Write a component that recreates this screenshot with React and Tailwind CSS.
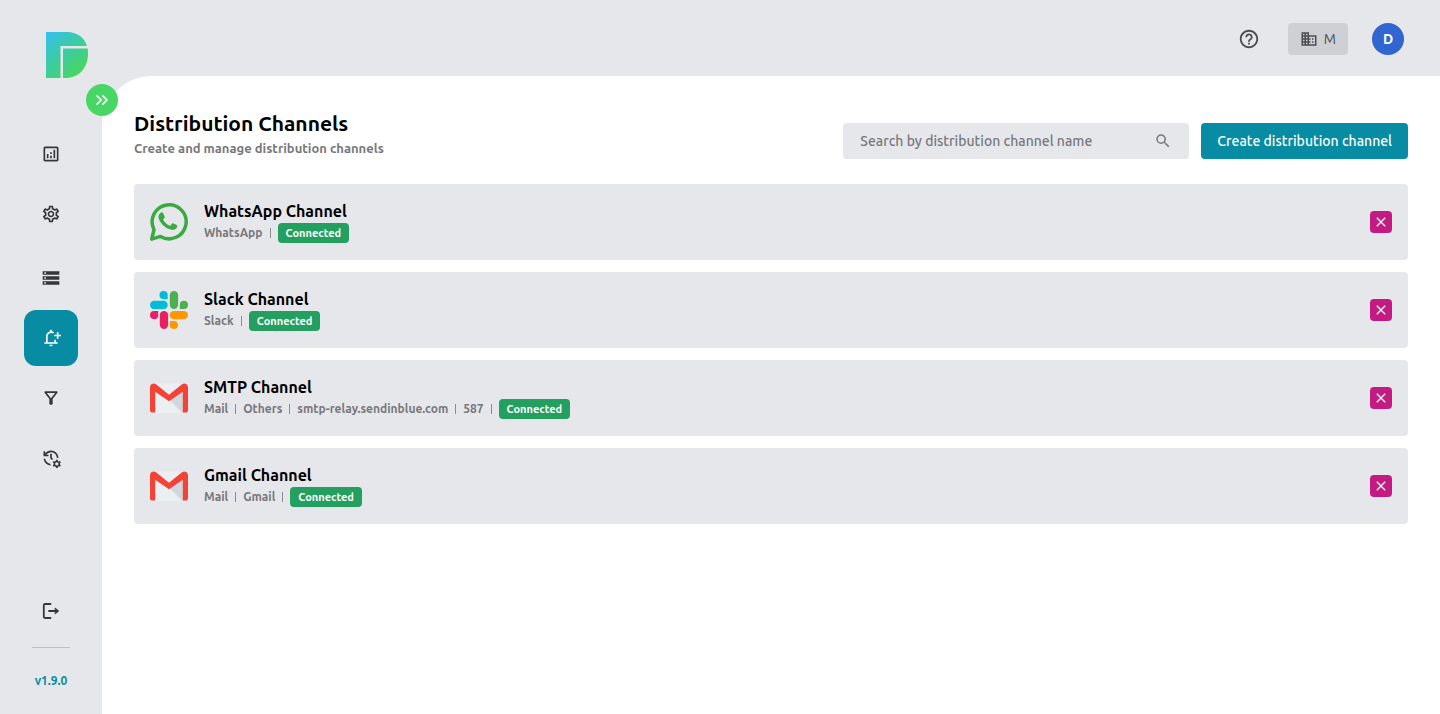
import { useState } from "react";
import { ChevronsRight } from "lucide-react";
import {
    MdOutlineAnalytics,
    MdOutlineSettings,
    MdStorage,
    MdOutlineNotificationAdd,
    MdOutlineFilterAlt,
    MdManageHistory,
    MdHelpOutline,
    MdBusiness,
    MdSearch,
    MdClose,
} from "react-icons/md";

const navGroups = [
    [
        { label: 'Dashboard', icon: MdOutlineAnalytics },
        { label: 'Settings', icon: MdOutlineSettings },
    ],
    [
        { label: 'Data sources', icon: MdStorage },
        { label: 'Distribution channels', icon: MdOutlineNotificationAdd },
        { label: 'Filters', icon: MdOutlineFilterAlt },
        { label: 'History', icon: MdManageHistory },
    ],
];

const channels = [
    { name: 'WhatsApp Channel', logo: WhatsAppLogo, details: ['WhatsApp'] },
    { name: 'Slack Channel', logo: SlackLogo, details: ['Slack'] },
    { name: 'SMTP Channel', logo: GmailLogo, details: ['Mail', 'Others', 'smtp-relay.sendinblue.com', '587'] },
    { name: 'Gmail Channel', logo: GmailLogo, details: ['Mail', 'Gmail'] },
];

function Logo() {
    return (
        <svg width="42" height="46" viewBox="0 0 42 46" aria-hidden="true">
            <defs>
                <linearGradient id="logo-fill" x1="0" y1="0" x2="34" y2="40" gradientUnits="userSpaceOnUse">
                    <stop offset="0" stopColor="#35c0ee" />
                    <stop offset="0.5" stopColor="#3bcba6" />
                    <stop offset="1" stopColor="#48d662" />
                </linearGradient>
            </defs>
            <path fill="url(#logo-fill)" d="M0 0h21c10 0 17.500 5.500 20 14H14.500v32H0z" />
            <path fill="url(#logo-fill)" d="M17 16.500h24.700c.2 1.500.3 3 .3 5C42 36 33 46 19 46h-2z" />
        </svg>
    )
}

function LogoutIcon() {
    return (
        <svg width="20" height="20" viewBox="0 0 20 20" fill="none" stroke="currentColor" strokeWidth="1.800" strokeLinecap="round" strokeLinejoin="round" aria-hidden="true">
            <path d="M9.500 3H4a1.200 1.200 0 0 0-1.200 1.200v11.600A1.200 1.200 0 0 0 4 17h5.500" />
            <path d="M8 10h8.500" />
            <path d="M14.500 7.300L17.500 10l-3 2.700z" fill="currentColor" strokeWidth="1" />
        </svg>
    )
}

function WhatsAppLogo() {
    return (
        <svg width="40" height="40" viewBox="0.5 0.5 40 40" fill="none" aria-hidden="true">
            <path d="M3.200 37.600l2.300-9.600A17 17 0 1 1 12 34.900z" stroke="#3aaa40" strokeWidth="3.500" strokeLinejoin="round" />
            <path transform="translate(1.800 1.800) scale(.88)" fill="#3aaa40" d="M14.700 11.300c-.4-.8-.8-.8-1.200-.8h-1c-.4 0-.9.100-1.400.7-.5.500-1.800 1.800-1.800 4.300 0 2.600 1.900 5 2.100 5.400.3.300 3.600 5.800 9 7.900 4.400 1.700 5.300 1.400 6.300 1.300s3.100-1.300 3.500-2.500c.4-1.200.4-2.300.3-2.500-.1-.2-.5-.4-1-.6l-3.600-1.700c-.5-.2-.8-.3-1.200.3l-1.700 2c-.3.400-.6.400-1.100.1-.6-.2-2.200-.8-4.200-2.600-1.600-1.400-2.600-3.100-2.900-3.600-.3-.6 0-.8.200-1.100l.8-.9c.3-.3.300-.5.500-.9.200-.3.100-.6 0-.9z" />
        </svg>
    )
}

function SlackLogo() {
    return (
        <svg width="40" height="40" viewBox="0 0 40 40" aria-hidden="true">
            <g fill="#00bcd4">
                <path d="M18.700 9.200h-4.200a4.100 4.100 0 1 1 4.200-4.100z" />
                <rect x="1" y="10.800" width="17.700" height="8.300" rx="4.150" />
            </g>
            <g fill="#4caf50">
                <rect x="20.800" y="1" width="8.300" height="18" rx="4.150" />
                <path d="M30.800 19v-4.200a4.100 4.100 0 1 1 4.100 4.200z" />
            </g>
            <g fill="#ff9800">
                <rect x="20.800" y="21" width="18.200" height="8.300" rx="4.150" />
                <path d="M20.800 30.900H25a4.100 4.100 0 1 1-4.200 4.100z" />
            </g>
            <g fill="#e91e63">
                <rect x="10.800" y="21" width="8.300" height="18" rx="4.150" />
                <path d="M9.200 21v4.200A4.100 4.100 0 1 1 5.100 21z" />
            </g>
        </svg>
    )
}

function GmailLogo() {
    return (
        <svg width="40" height="40" viewBox="0 0 40 40" aria-hidden="true">
            <path fill="#eceff1" d="M3 5.500h34v29.500H3z" />
            <path fill="#cfd8dc" d="M20 21.500L33 34.500h2V11z" />
            <path fill="#f44336" d="M1 9.500v22.400a2.700 2.700 0 0 0 2.700 2.700H6.200V13.800L20 23.300l13.800-9.500v20.800h2.500a2.700 2.700 0 0 0 2.700-2.700V9.500c0-3.400-3.300-5-6-3.300L20 16.800 7 6.200c-2.700-1.700-6-.1-6 3.300z" />
        </svg>
    )
}

function Sidebar() {
    const [active, setActive] = useState('Distribution channels');

    return (
        <aside className="w-[102px] shrink-0 flex flex-col items-center pt-8 pb-6">
            <div className="self-end pr-[14px]">
                <Logo />
            </div>
            <nav className="mt-12 flex flex-col gap-2">
                {navGroups.map((group, index) => (
                    <div key={index} className="flex flex-col gap-1">
                        {group.map((item) => (
                            <button key={item.label} type="button" aria-label={item.label} onClick={() => setActive(item.label)}
                                className={`w-[54px] h-14 rounded-xl flex items-center justify-center ${active === item.label ? 'bg-[#078ca3] text-white' : 'text-[#33363b]'}`}>
                                <item.icon size={20} />
                            </button>
                        ))}
                    </div>
                ))}
            </nav>
            <button type="button" aria-label="Log out" className="mt-auto p-2 text-[#33363b]">
                <LogoutIcon />
            </button>
            <hr className="w-[38px] mt-[18px] border-[#bdbfc3]" />
            <p className="mt-6 text-xs leading-[18px] font-bold text-[#078ca3]">v1.9.0</p>
        </aside>
    )
}

function TopBar() {
    return (
        <header className="h-[76px] shrink-0 flex items-center justify-end pt-[2px] pr-9">
            <button type="button" aria-label="Help" className="text-[#4a4c50]">
                <MdHelpOutline size={22} />
            </button>
            <button type="button" className="ml-7 h-8 px-3 rounded flex items-center gap-1.5 bg-[#cfd0d4] text-[#4a4c50] text-sm">
                <MdBusiness size={18} />
                M
            </button>
            <button type="button" className="ml-6 size-8 rounded-full bg-[#3165d0] text-white text-sm font-semibold">D</button>
        </header>
    )
}

function ChannelCard({ channel }) {
    return (
        <li className="h-[76px] pl-[15px] pr-4 rounded flex items-center bg-[#e6e7eb]">
            <channel.logo />
            <div className="ml-[15px]">
                <h2 className="text-base leading-5 font-semibold text-black">{channel.name}</h2>
                <div className="mt-[2px] flex items-center text-xs leading-5 font-semibold text-[#77787b]">
                    {channel.details.map((detail) => (
                        <span key={detail} className="flex items-center">
                            {detail}
                            <span className="mx-[7px] w-px h-[10px] bg-[#8b8c8f]" />
                        </span>
                    ))}
                    <span className="h-5 px-2 rounded bg-[#23a05f] text-[11px] text-white font-bold">Connected</span>
                </div>
            </div>
            <button type="button" aria-label={`Remove ${channel.name}`}
                className="ml-auto size-[22px] rounded flex items-center justify-center bg-[#c41a82] text-white">
                <MdClose size={16} />
            </button>
        </li>
    )
}

export default function App() {
    const [search, setSearch] = useState('');
    const list = channels.filter(c => c.name.toLowerCase().includes(search.toLowerCase()));

    return (
        <div className="min-h-screen flex bg-[#e6e7eb] font-['Ubuntu','Noto_Sans',sans-serif]">
            <Sidebar />
            <div className="relative flex-1 min-w-0 flex flex-col">
                <TopBar />
                <button type="button" aria-label="Expand menu"
                    className="absolute top-[84px] -left-4 size-8 rounded-full flex items-center justify-center bg-[#48d766] text-white">
                    <ChevronsRight size={20} />
                </button>
                <main className="flex-1 px-8 pt-9 rounded-tl-[50px] bg-white">
                    <div className="flex items-start justify-between">
                        <div>
                            <h1 className="text-[21px] leading-[22px] font-semibold text-black">Distribution Channels</h1>
                            <p className="mt-[5px] text-[13px] leading-[18px] font-semibold text-[#77787b]">Create and manage distribution channels</p>
                        </div>
                        <div className="mt-[11px] flex items-center gap-3">
                            <label className="w-[346px] h-9 px-[17px] rounded flex items-center bg-[#e6e7eb] text-[#77787b]">
                                <input type="text" value={search} onChange={(e) => setSearch(e.target.value)}
                                    aria-label="Search by distribution channel name"
                                    placeholder="Search by distribution channel name"
                                    className="flex-1 min-w-0 text-sm font-medium outline-none placeholder:text-[#77787b]" />
                                <MdSearch size={18} />
                            </label>
                            <button type="button" className="h-9 px-4 rounded bg-[#078ca3] text-white text-sm font-medium">
                                Create distribution channel
                            </button>
                        </div>
                    </div>
                    <ul className="mt-[25px] flex flex-col gap-3">
                        {list.map((channel) => (
                            <ChannelCard key={channel.name} channel={channel} />
                        ))}
                    </ul>
                </main>
            </div>
        </div>
    )
}
